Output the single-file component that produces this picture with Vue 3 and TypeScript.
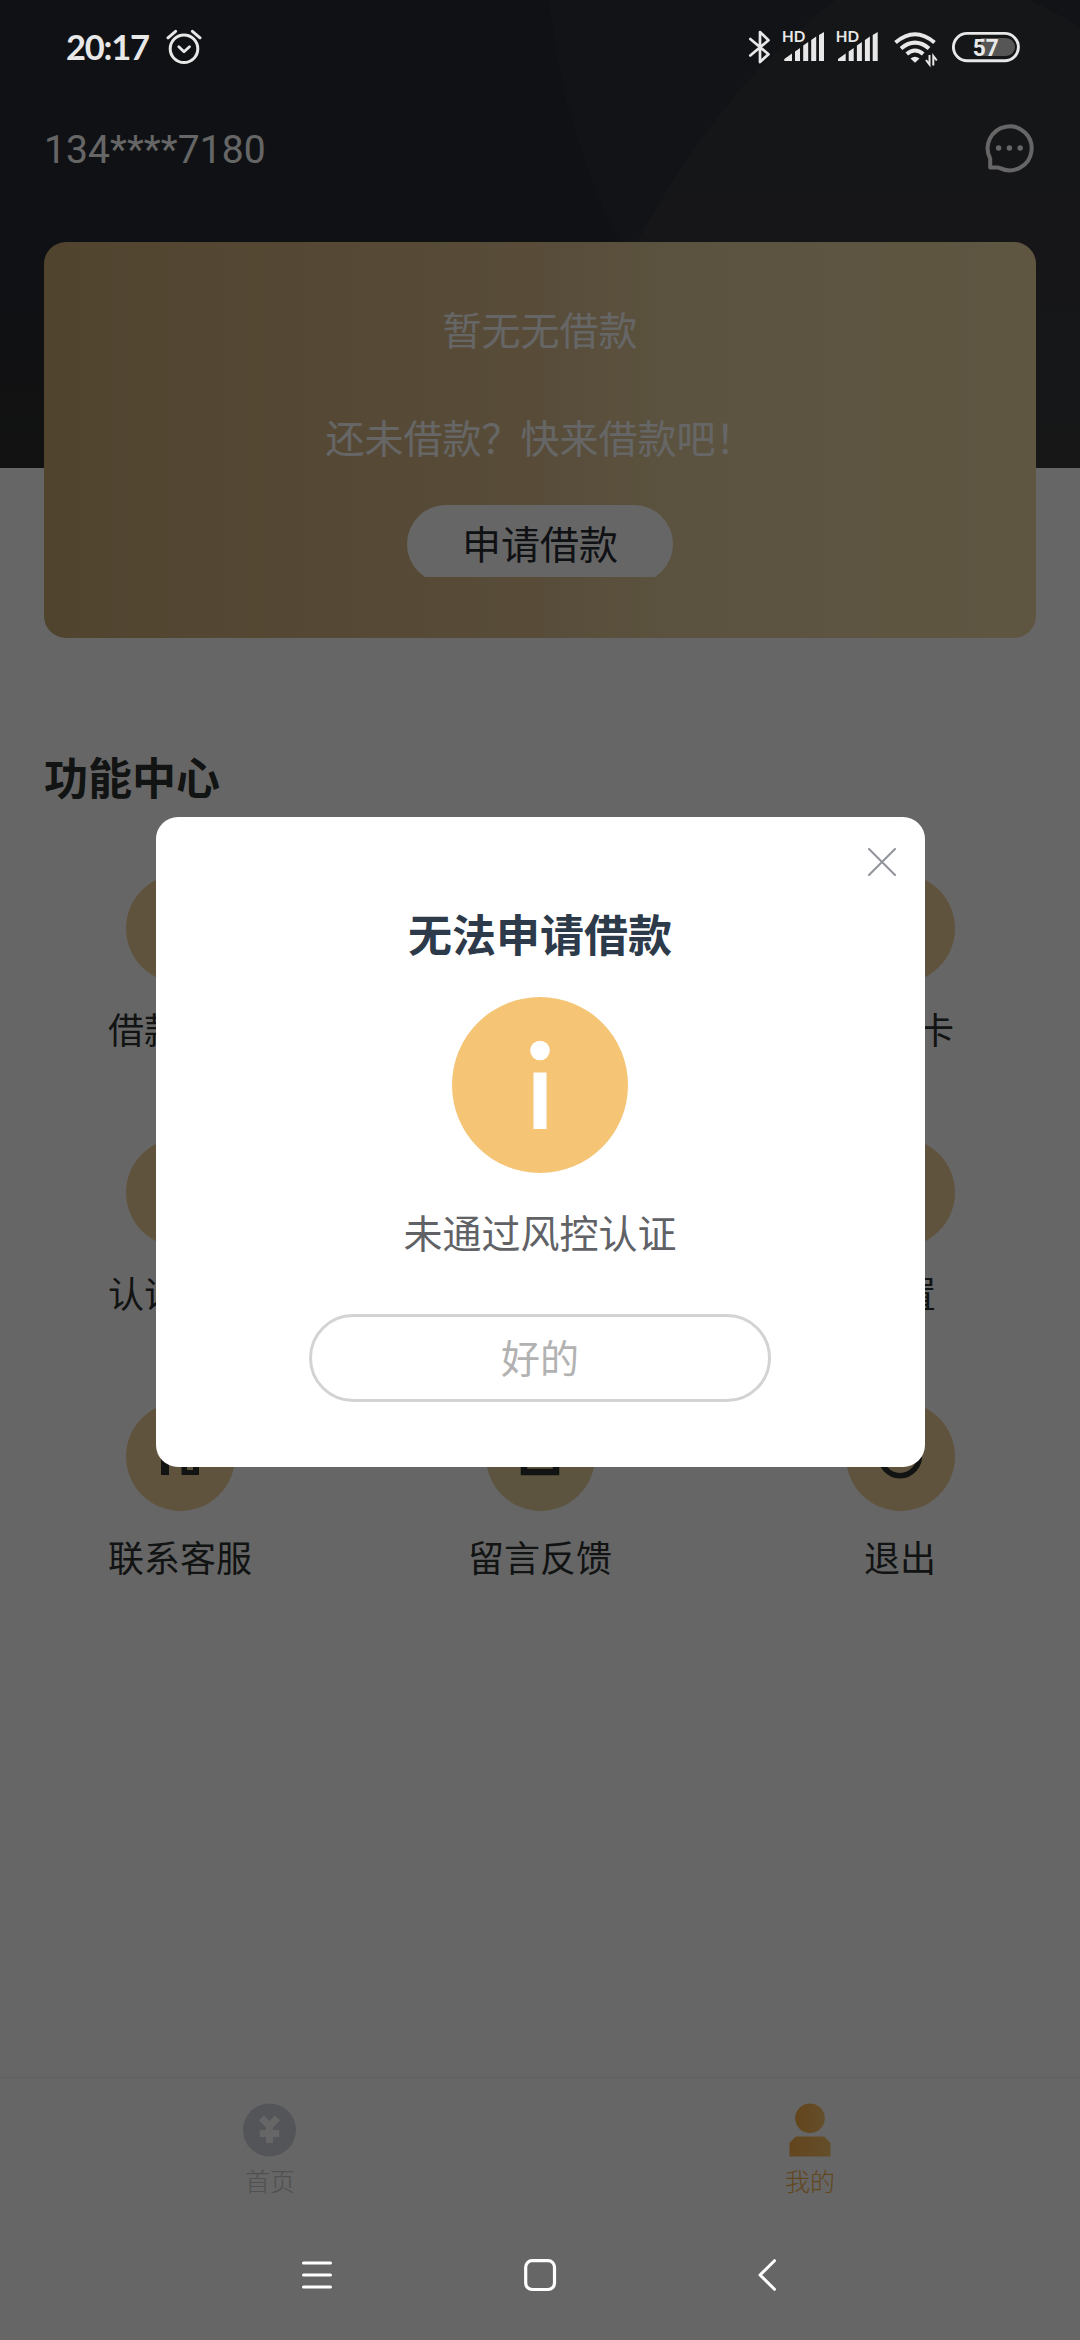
<script setup lang="ts">
import { ref } from 'vue'

interface Feature {
  label: string
  icon: 'list' | 'wallet' | 'card' | 'shield' | 'help' | 'gear' | 'service' | 'message' | 'power'
}

const phone = ref('134****7180')
const dialogOpen = ref(true)

const features: Feature[] = [
  { label: '借款记录', icon: 'list' },
  { label: '我的钱包', icon: 'wallet' },
  { label: '银行卡', icon: 'card' },
  { label: '认证中心', icon: 'shield' },
  { label: '帮助中心', icon: 'help' },
  { label: '设置', icon: 'gear' },
  { label: '联系客服', icon: 'service' },
  { label: '留言反馈', icon: 'message' },
  { label: '退出', icon: 'power' },
]
</script>

<template>
  <div class="screen">
    <div class="page">
      <svg class="hero" viewBox="0 0 1080 468" width="1080" height="468">
        <defs>
          <linearGradient id="heroBase" x1="0" y1="0" x2="0" y2="1">
            <stop offset="0" stop-color="#282b33" />
            <stop offset="0.55" stop-color="#282b33" />
            <stop offset="1" stop-color="#2d2d2d" />
          </linearGradient>
          <linearGradient id="heroArc" x1="0" y1="0" x2="0" y2="1">
            <stop offset="0" stop-color="#35373d" />
            <stop offset="0.55" stop-color="#37393f" />
            <stop offset="1" stop-color="#3a3b3b" />
          </linearGradient>
        </defs>
        <rect width="1080" height="468" fill="url(#heroBase)" />
        <circle cx="1236" cy="-68" r="690" fill="#2f3138" />
        <path d="M836 0C745 68 682 160 638 241L560 468H1080V28Q1056 12 1029 0Z" fill="url(#heroArc)" />
      </svg>

      <header class="account">
        <span class="phone">{{ phone }}</span>
        <svg class="chat" viewBox="0 0 50 50" width="50" height="50">
          <path d="M6.2 35.6A22 22 0 1 1 16 45.1Q14.600 44.500 13.500 44.500H6.200Z" fill="none" stroke="#fff" stroke-width="4" stroke-linejoin="round" />
          <circle cx="14.600" cy="25" r="2.700" fill="#fff" />
          <circle cx="25.400" cy="25" r="2.700" fill="#fff" />
          <circle cx="36.200" cy="25" r="2.700" fill="#fff" />
        </svg>
      </header>

      <section class="loan-card">
        <p class="loan-line">暂无无借款</p>
        <p class="loan-line second">还未借款？快来借款吧！</p>
        <div class="apply-clip">
          <button class="apply">申请借款</button>
        </div>
      </section>

      <h2 class="section-title">功能中心</h2>

      <ul class="grid">
        <li v-for="(f, i) in features" :key="f.icon" class="feature">
          <svg viewBox="0 0 109 109" width="109" height="109">
            <circle cx="54.500" cy="54.500" r="54.500" :fill="i % 3 === 1 ? '#e6d29b' : '#f0cf98'" />
            <g v-if="f.icon === 'service'" fill="#2d3030">
              <path d="M35 50a19 19 0 0 1 38 0v23H55.500V53H67a13 13 0 0 0-26 0h2v20h-8zM61 60v8h6v-8z" fill-rule="evenodd" />
            </g>
            <rect v-else-if="f.icon === 'message'" x="38" y="38" width="32" height="32" fill="none" stroke="#2d3030" stroke-width="6.500" />
            <g v-else-if="f.icon === 'power'" fill="none" stroke="#2d3030" stroke-width="5.500">
              <path d="M43 38.500a19.300 19.300 0 1 0 22 0M54 32v20" />
            </g>
            <rect v-else x="38" y="38" width="32" height="32" rx="4" fill="none" stroke="#2d3030" stroke-width="6" />
          </svg>
          <span>{{ f.label }}</span>
        </li>
      </ul>

      <nav class="tabs">
        <div class="tab">
          <svg viewBox="0 0 54 54" width="54" height="54">
            <circle cx="26.500" cy="27" r="26.500" fill="#d1d5de" />
            <path d="M18.500 15L26.500 23L34.500 15M16.800 30.500H36.200M26.500 22V40" fill="none" stroke="#fff" stroke-width="7" />
          </svg>
          <span>首页</span>
        </div>
        <div class="tab active">
          <svg viewBox="0 0 54 54" width="54" height="54">
            <defs>
              <linearGradient id="gold" x1="0" y1="0" x2="1" y2="0">
                <stop offset="0" stop-color="#f6ad48" />
                <stop offset="1" stop-color="#fbc36c" />
              </linearGradient>
            </defs>
            <circle cx="27" cy="15.300" r="14.800" fill="url(#gold)" />
            <path d="M12.800 33.500H41.200L47.500 40V53.500H6.500V40Z" fill="url(#gold)" />
          </svg>
          <span>我的</span>
        </div>
      </nav>
    </div>

    <div v-if="dialogOpen" class="mask">
      <section class="dialog">
        <button class="close" @click="dialogOpen = false">
          <svg viewBox="0 0 28 28" width="28" height="28">
            <path d="M1 1L27 27M27 1L1 27" stroke="#909399" stroke-width="2" stroke-linecap="round" />
          </svg>
        </button>
        <h3>无法申请借款</h3>
        <svg class="info" viewBox="0 0 176 176" width="176" height="176">
          <circle cx="88" cy="88" r="88" fill="#f5c475" />
          <circle cx="88" cy="53.500" r="9.800" fill="#fff" />
          <rect x="81.500" y="75.500" width="13" height="56.500" fill="#fff" />
        </svg>
        <p>未通过风控认证</p>
        <button class="ok" @click="dialogOpen = false">好的</button>
      </section>
    </div>

    <div class="system">
      <div class="status">
        <div class="left">
          <span class="clock">20:17</span>
          <svg viewBox="0 0 36 36" width="36" height="36" fill="none" stroke="#e8e8e8" stroke-linecap="round">
            <circle cx="18" cy="19.800" r="13.800" stroke-width="3" />
            <path d="M12.800 17.800L18 22.800L23.500 17.800" stroke-width="2.800" stroke-linejoin="round" />
            <path d="M2 8.800L9.600 2.300M34 8.800L26.400 2.300" stroke-width="3" />
          </svg>
        </div>
        <svg class="right" viewBox="748 26 274 42" width="274" height="42">
          <path d="M750.300 39L768.500 54.300L760 62V32L768.500 40.200L750.300 55.500" fill="none" stroke="#e8e8e8" stroke-width="2.700" stroke-linecap="round" stroke-linejoin="round" />
          <g v-for="x in [0, 53.700]" :key="x" :transform="`translate(${x} 0)`" fill="#e8e8e8">
            <text x="782" y="42.400" class="hd">HD</text>
            <path d="M784.300 59L792 53.500V61H784.300ZM795 51.500L800 48V61H795ZM803.200 45.500L808.200 42V61H803.200ZM811.200 40L816.200 36.500V61H811.200ZM819 35L824 32V61H819Z" />
          </g>
          <g fill="none" stroke="#e8e8e8" stroke-width="4">
            <path d="M895.500 42.500Q915 26 934.500 42.500" />
            <path d="M901 48.500Q915 36.800 929 48.500" />
            <path d="M906.800 54Q915 47 923.200 54" />
          </g>
          <path d="M910.500 58.500Q915 55.200 919.500 58.500L915 62.800Z" fill="#e8e8e8" />
          <path d="M929.500 55V64.500L926 60M933.300 65.500V56L936.800 60.500" fill="none" stroke="#e8e8e8" stroke-width="2" />
          <path d="M981 38H1006a9 9 0 0 1 0 18H981Z" fill="#565656" />
          <rect x="953.400" y="33.400" width="65" height="27.400" rx="13.700" fill="none" stroke="#e8e8e8" stroke-width="2.900" />
          <text x="972.700" y="55.900" textLength="26" lengthAdjust="spacingAndGlyphs" class="level">57</text>
        </svg>
      </div>
      <svg class="keys" viewBox="0 0 1080 34" width="1080" height="34" fill="none" stroke="#fff" stroke-linecap="round">
        <path d="M303.500 5H330.500M303.500 17H330.500M303.500 29H330.500" stroke-width="3" />
        <rect x="525.700" y="2.700" width="28.800" height="28.800" rx="6.500" stroke-width="3.200" />
        <path d="M774.500 2.700L760 17L774.500 31.300" stroke-width="3" stroke-linejoin="round" />
      </svg>
    </div>
  </div>
</template>

<style>
body {
  margin: 0;
}
</style>

<style scoped>
.screen {
  position: relative;
  width: 1080px;
  height: 2340px;
  overflow: hidden;
  background: #fff;
  font-family: 'Noto Sans CJK SC', sans-serif;
}
.page {
  position: relative;
  display: flex;
  flex-direction: column;
  height: 2340px;
}
svg {
  display: block;
  flex: none;
}
h2,
h3,
p,
ul {
  margin: 0;
  padding: 0;
}
button {
  border: 0;
  padding: 0;
  background: none;
  font-family: inherit;
}
.hero {
  position: absolute;
  top: 0;
  left: 0;
}
.account {
  position: relative;
  display: flex;
  align-items: center;
  justify-content: space-between;
  height: 60px;
  margin-top: 118px;
  padding: 0 46px 0 44px;
}
.phone {
  padding-top: 3px;
  font: 400 39px/60px Roboto, sans-serif;
  letter-spacing: 0.1px;
  color: #fff;
}
.loan-card {
  position: relative;
  display: flex;
  flex-direction: column;
  align-items: center;
  box-sizing: border-box;
  height: 396px;
  margin: 64px 44px 0;
  padding-top: 56px;
  border-radius: 22px;
  background: linear-gradient(90deg, #caaa76, #dcbf90 50%, #e4d09f 65%, #eed7a6);
}
.loan-line {
  font-size: 39px;
  line-height: 60px;
  color: #fff;
}
.loan-line.second {
  margin-top: 48px;
}
.apply-clip {
  height: 72px;
  margin-top: 39px;
  overflow: hidden;
}
.apply {
  display: block;
  width: 266px;
  height: 78px;
  padding-bottom: 4px;
  border-radius: 39px;
  background: #fff;
  color: #2a2c33;
  font-size: 39px;
  line-height: 74px;
}
.section-title {
  margin: 108px 44px 0;
  font-size: 44px;
  line-height: 60px;
  font-weight: 700;
  color: #2d3030;
}
.grid {
  display: grid;
  grid-template-columns: repeat(3, 360px);
  grid-auto-rows: 264px;
  margin-top: 68px;
  list-style: none;
}
.feature {
  display: flex;
  flex-direction: column;
  align-items: center;
  font-size: 36px;
  line-height: 54px;
  color: #2d3030;
}
.feature span {
  margin-top: 18px;
}
.tabs {
  display: flex;
  height: 262px;
  margin-top: auto;
  border-top: 1px solid #efefef;
}
.tab {
  display: flex;
  flex: 1;
  flex-direction: column;
  align-items: center;
  padding-top: 25px;
  font-size: 25px;
  font-weight: 300;
  line-height: 36px;
  color: #c8c8c8;
}
.tab span {
  margin-top: 5px;
}
.tab.active {
  color: #f5b04c;
}
.mask {
  position: absolute;
  inset: 0;
  display: flex;
  flex-direction: column;
  align-items: center;
  background: rgba(0, 0, 0, 0.6);
}
.dialog {
  position: relative;
  display: flex;
  flex-direction: column;
  align-items: center;
  box-sizing: border-box;
  width: 769px;
  height: 650px;
  margin-top: 817px;
  padding-top: 86px;
  border-radius: 22px;
  background: #fff;
}
.close {
  position: absolute;
  top: 31px;
  right: 29px;
}
.dialog h3 {
  font-size: 44px;
  line-height: 60px;
  font-weight: 700;
  color: #2c3a4a;
}
.info {
  margin-top: 34px;
}
.dialog p {
  margin-top: 28px;
  font-size: 39px;
  line-height: 60px;
  color: #606266;
}
.ok {
  box-sizing: border-box;
  width: 462px;
  height: 88px;
  margin-top: 53px;
  padding-bottom: 4px;
  border: 3px solid #d3d3d3;
  border-radius: 44px;
  color: #b2b2b2;
  font-size: 39px;
  line-height: 78px;
}
.system {
  position: absolute;
  inset: 0;
  display: flex;
  flex-direction: column;
  justify-content: space-between;
  padding: 26px 0 48px;
  pointer-events: none;
}
.status {
  display: flex;
  align-items: center;
  justify-content: space-between;
  height: 42px;
  padding: 0 58px 0 66px;
}
.left {
  display: flex;
  align-items: center;
  gap: 17px;
}
.clock {
  font: 700 34.500px/42px Lato, sans-serif;
  letter-spacing: -1.200px;
  color: #e8e8e8;
}
.hd {
  font: 700 15.200px Lato, sans-serif;
}
.level {
  font: 700 24.500px Roboto, sans-serif;
  fill: #e8e8e8;
}
</style>
